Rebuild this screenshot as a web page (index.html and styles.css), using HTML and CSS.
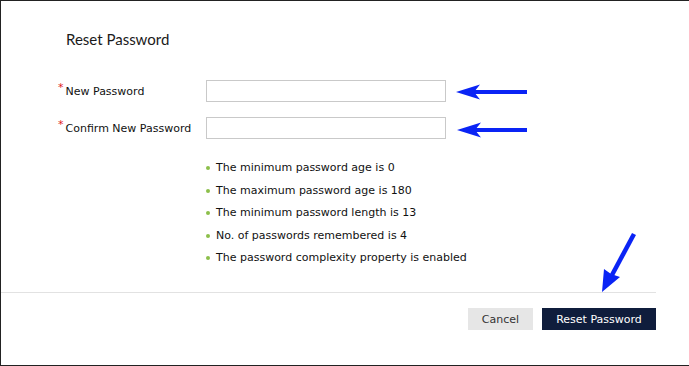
FILE: index.html
```html
<!DOCTYPE html>
<html>
<head>
<meta charset="utf-8">
<link rel="stylesheet" href="styles.css">
</head>
<body>
<div class="dialog">
  <div class="content">
    <h1 class="title">Reset Password</h1>
    <div class="form">
      <div class="row">
        <label class="label"><span class="req">*</span>New Password</label>
        <input class="field" type="password">
      </div>
      <div class="row">
        <label class="label"><span class="req">*</span>Confirm New Password</label>
        <input class="field" type="password">
      </div>
    </div>
    <ul class="rules">
      <li>The minimum password age is 0</li>
      <li>The maximum password age is 180</li>
      <li>The minimum password length is 13</li>
      <li>No. of passwords remembered is 4</li>
      <li>The password complexity property is enabled</li>
    </ul>
    <div class="footer">
      <button class="btn btn-cancel">Cancel</button>
      <button class="btn btn-primary">Reset Password</button>
    </div>
  </div>
  <svg class="arrows" width="689" height="366" viewBox="0 0 689 366">
    <g fill="#0a24f5">
      <rect x="470" y="90" width="57" height="4"/>
      <polygon points="456,92 480,84.5 474,92 480,99.5"/>
      <rect x="470" y="128" width="57" height="4"/>
      <polygon points="457,130 481,122.5 475,130 481,137.5"/>
    </g>
    <line x1="634" y1="234" x2="612" y2="275" stroke="#0a24f5" stroke-width="4.5" stroke-linecap="butt"/>
    <polygon fill="#0a24f5" points="602,292 604,269 611,274 620,277"/>
  </svg>
</div>
</body>
</html>
```

FILE: styles.css
```css
html, body {
  margin: 0;
  padding: 0;
  background: #fff;
}
body {
  width: 689px;
  height: 366px;
  overflow: hidden;
}
.dialog {
  position: relative;
  box-sizing: border-box;
  width: 689px;
  height: 366px;
  border: 1px solid #222;
  border-right: 0;
  font-family: "DejaVu Sans", Verdana, sans-serif;
  font-size: 11px;
  color: #111;
}
.content {
  width: 655px;
}
.title {
  margin: 0;
  padding: 28px 0 0 65px;
  font-family: Lato, "Open Sans", sans-serif;
  font-weight: 400;
  font-size: 15px;
  line-height: 20px;
  color: #1a1a1a;
}
.form {
  display: flex;
  flex-direction: column;
  gap: 15px;
  margin-top: 31px;
}
.row {
  display: flex;
  align-items: center;
  height: 22px;
}
.label {
  box-sizing: border-box;
  width: 205px;
  padding-left: 57px;
}
.req {
  color: #e0201b;
  font-size: 11px;
  position: relative;
  top: -4px;
  margin-right: 2px;
}
.field {
  box-sizing: border-box;
  width: 240px;
  height: 22px;
  margin: 0;
  border: 1px solid #c9c9c9;
  border-radius: 0;
  padding: 0 4px;
  background: #fff;
  outline: none;
}
.rules {
  list-style: none;
  margin: 18px 0 0 205px;
  padding: 0;
  line-height: 22.5px;
}
.rules li {
  position: relative;
  padding-left: 10px;
}
.rules li::before {
  content: "";
  position: absolute;
  left: 0;
  top: 9px;
  width: 4px;
  height: 4px;
  border-radius: 50%;
  background: #8cbf4a;
}
.footer {
  margin-top: 22px;
  border-top: 1px solid #e2e2e2;
  padding-top: 15px;
  display: flex;
  justify-content: flex-end;
  gap: 9px;
}
.btn {
  height: 22px;
  border: 0;
  border-radius: 0;
  font-family: "DejaVu Sans", Verdana, sans-serif;
  font-size: 11px;
  padding: 1px 0 0;
  margin: 0;
}
.btn-cancel {
  width: 65px;
  background: #e6e6e6;
  color: #333;
}
.btn-primary {
  width: 114px;
  background: #0f1d3c;
  color: #fff;
}
.arrows {
  position: absolute;
  left: -1px;
  top: -1px;
  pointer-events: none;
}
```
